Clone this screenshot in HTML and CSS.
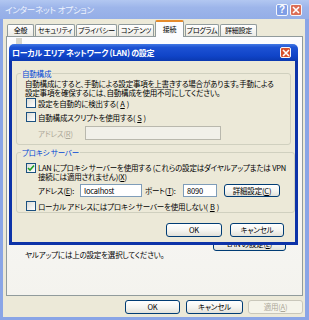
FILE: index.html
```html
<!DOCTYPE html>
<html lang="ja">
<head>
    <meta charset="UTF-8">
    <meta name="viewport" content="width=device-width, initial-scale=1.0">
    <title>インターネット オプション</title>
    <link rel="stylesheet" href="styles.css">
</head>
<body>
    <div class="window">
        <div class="titlebar">
            <span class="title">インターネット オプション</span>
            <span class="tb-btn help">?</span>
            <span class="tb-btn close">
                <svg width="8" height="8" viewBox="0 0 8 8"><path d="M1 1L7 7M7 1L1 7" stroke="#fff" stroke-width="1.6"/></svg>
            </span>
        </div>
        <div class="frame">
            <div class="tabs">
                <div class="tab w27">全般</div>
                <div class="tab w40">セキュリティ</div>
                <div class="tab w41">プライバシー</div>
                <div class="tab w36">コンテンツ</div>
                <div class="tab active w29">接続</div>
                <div class="tab w34">プログラム</div>
                <div class="tab w37">詳細設定</div>
            </div>
            <div class="panel">
                <div class="panel-icon"></div>
                <div class="lan-row">
                    <button class="btn lan-btn">LAN の設定(<u>L</u>)</button>
                </div>
                <div class="lan-note">ヤルアップには上の設定を選択してください。</div>
            </div>
            <div class="actions">
                <button class="btn w55">OK</button>
                <button class="btn w57">キャンセル</button>
                <button class="btn w55 disabled">適用(<u>A</u>)</button>
            </div>
        </div>

        <div class="dialog">
            <div class="dlg-title">
                <span class="dlg-name">ローカル エリア ネットワーク (LAN) の設定</span>
                <span class="tb-btn close active-close">
                    <svg width="8" height="8" viewBox="0 0 8 8"><path d="M1 1L7 7M7 1L1 7" stroke="#fff" stroke-width="1.6"/></svg>
                </span>
            </div>
            <div class="dlg-body">
                <fieldset class="group">
                    <legend>自動構成</legend>
                    <p class="note">自動構成にすると、手動による設定事項を上書きする場合があります。手動による<br>設定事項を確保するには、自動構成を使用不可にしてください。</p>
                    <label class="check first"><span class="box"></span>設定を自動的に検出する(<u>A</u>)</label>
                    <label class="check"><span class="box"></span>自動構成スクリプトを使用する(<u>S</u>)</label>
                    <div class="addr-row">
                        <span class="muted addr-label">アドレス(<u>R</u>)</span>
                        <span class="field disabled w136"></span>
                    </div>
                </fieldset>

                <fieldset class="group proxy">
                    <legend>プロキシ サーバー</legend>
                    <label class="check two-line">
                        <span class="box checked">
                            <svg width="8" height="8" viewBox="0 0 8 8"><path d="M1 4L3 6L7 1.5" fill="none" stroke="#21a121" stroke-width="1.6"/></svg>
                        </span>
                        <span>LAN にプロキシ サーバーを使用する (これらの設定はダイヤルアップまたは VPN<br>接続には適用されません)(<u>X</u>)</span>
                    </label>
                    <div class="proxy-row">
                        <span class="proxy-label">アドレス(<u>E</u>):</span>
                        <span class="field w62">localhost</span>
                        <span class="port-label">ポート(<u>T</u>):</span>
                        <span class="field w34">8090</span>
                        <button class="btn w56 adv-btn">詳細設定(<u>C</u>)</button>
                    </div>
                    <label class="check local"><span class="box"></span>ローカル アドレスにはプロキシ サーバーを使用しない(<u>B</u>)</label>
                </fieldset>

                <div class="dlg-actions">
                    <button class="btn w56">OK</button>
                    <button class="btn w54">キャンセル</button>
                </div>
            </div>
        </div>
    </div>
</body>
</html>
```

FILE: styles.css
```css
* {
    box-sizing: border-box;
}

body {
    margin: 0;
    font-family: "Noto Sans CJK JP", sans-serif;
    font-size: 7.5px;
    line-height: 9px;
    letter-spacing: -0.2px;
    font-feature-settings: "palt";
    color: #000000;
}

u {
    text-decoration: underline;
}

.window {
    position: relative;
    width: 309px;
    height: 320px;
    display: flex;
    flex-direction: column;
    background: #8aa5e6;
}

.titlebar {
    height: 19px;
    display: flex;
    align-items: center;
    padding: 0 7px 0 5px;
    background: linear-gradient(#b2c7f1, #9db5ea 40%, #94aee7);
}

.title {
    flex: 1;
    color: #eef3fd;
    font-size: 8.5px;
}

.tb-btn {
    width: 12px;
    height: 12px;
    margin-left: 2px;
    border: 1px solid #f4f6fc;
    border-radius: 2px;
    display: flex;
    align-items: center;
    justify-content: center;
}

.help {
    background: #7f9ee6;
    color: #ffffff;
    font-family: "Liberation Sans", sans-serif;
    font-weight: bold;
    font-size: 10px;
    letter-spacing: 0;
}

.close {
    background: #dc6d55;
}

.frame {
    flex: 1;
    margin: 0 4px 3px 3px;
    padding: 0 2px 0 3px;
    background: #ece9d8;
    display: flex;
    flex-direction: column;
}

/* tabs */

.tabs {
    height: 17px;
    display: flex;
    align-items: flex-end;
    padding-left: 1px;
    position: relative;
    z-index: 1;
}

.tab {
    height: 12px;
    margin-right: 1px;
    border: 1px solid #919b9c;
    border-bottom: none;
    border-radius: 2px 2px 0 0;
    background: linear-gradient(#ffffff, #ecebe5);
    text-align: center;
    font-size: 7px;
    letter-spacing: -0.3px;
    line-height: 11px;
    white-space: nowrap;
    overflow: hidden;
}

.tab.active {
    height: 17px;
    margin-bottom: -1px;
    border-top: 2px solid #e68b2c;
    background: #fcfcfe;
    line-height: 14px;
}

.w27 { width: 27px; }
.w29 { width: 29px; }
.w34 { width: 34px; }
.w36 { width: 36px; }
.w37 { width: 37px; }
.w40 { width: 40px; }
.w41 { width: 41px; }
.w54 { width: 54px; }
.w55 { width: 55px; }
.w56 { width: 56px; }
.w57 { width: 57px; }
.w62 { width: 62px; }
.w136 { width: 136px; }

.panel {
    height: 260px;
    border: 1px solid #919b9c;
    background: linear-gradient(#fcfcfe, #f4f3ee);
    padding: 1px 16px 0 18px;
}

.panel-icon {
    width: 6px;
    height: 6px;
    margin-left: -9px;
    background: #d8d6cc;
}

.lan-row {
    margin-top: 193px;
    display: flex;
    justify-content: flex-end;
}

.lan-btn {
    width: 73px;
}

.lan-note {
    margin-top: -1px;
}

.actions {
    margin-top: 4px;
    display: flex;
    justify-content: flex-end;
    gap: 5px;
}

.actions .btn:first-child {
    margin-right: 1px;
}

/* buttons */

.btn {
    font: inherit;
    letter-spacing: inherit;
    font-feature-settings: "palt";
    height: 14px;
    padding: 0;
    border: 1px solid #003c74;
    border-radius: 3px;
    background: linear-gradient(#ffffff, #f4f4f0 55%, #e2e1d9);
    color: #000000;
    line-height: 12px;
}

.btn.disabled {
    border-color: #c9c7ba;
    background: #f5f4ea;
    color: #aca899;
}

/* overlay dialog */

.dialog {
    position: absolute;
    left: 9px;
    top: 44px;
    width: 289px;
    height: 201px;
    display: flex;
    flex-direction: column;
}

.dlg-title {
    height: 17px;
    display: flex;
    align-items: center;
    padding: 0 7px 0 3px;
    border-radius: 5px 5px 0 0;
    background: linear-gradient(#4278e4, #1d52d3 20%, #1044c8 70%, #0b39b0);
    color: #ffffff;
    font-weight: bold;
    font-size: 8px;
    letter-spacing: -0.3px;
}

.dlg-name {
    flex: 1;
}

.active-close {
    width: 11px;
    height: 11px;
    background: #d8502c;
}

.dlg-body {
    flex: 1;
    border: 3px solid #0d33a8;
    border-top: none;
    background: #ece9d8;
    padding: 8px 4px 0 4px;
}

.group {
    margin: 0;
    padding: 0 8px 4px 9px;
    border: 1px solid #d0d0bf;
    border-radius: 3px;
}

.group legend {
    margin-left: -5px;
    padding: 0 1px;
    color: #0046d5;
    line-height: 9px;
}

.note {
    margin: 1px 0 0 -1px;
    white-space: nowrap;
}

.check {
    height: 10px;
    margin-top: 4px;
    display: flex;
    align-items: center;
    gap: 2px;
    white-space: nowrap;
}

.check.first {
    margin-top: 1px;
}

.box {
    width: 10px;
    height: 10px;
    flex: none;
    border: 1px solid #1c5180;
    background: linear-gradient(135deg, #dcdcd7, #ffffff);
    display: flex;
    align-items: center;
    justify-content: center;
}

.addr-row {
    margin-top: 4px;
    display: flex;
    align-items: center;
    padding-left: 12px;
}

.muted {
    color: #aca899;
}

.addr-label {
    width: 47px;
}

.field {
    height: 14px;
    padding: 0 3px;
    border: 1px solid #7f9db9;
    background: #ffffff;
    line-height: 12px;
}

.field.disabled {
    border-color: #b9b8ad;
    background: #f1f0e9;
}

.proxy {
    margin-top: 3px;
    padding-bottom: 1px;
}

.two-line {
    height: 18px;
    margin-top: 6px;
    align-items: flex-start;
    line-height: 9px;
}

.proxy-row {
    margin-top: 3px;
    display: flex;
    align-items: center;
    padding-left: 12px;
    white-space: nowrap;
}

.proxy-row .field {
    height: 13px;
    line-height: 11px;
}

.proxy-label {
    width: 42px;
}

.port-label {
    width: 38px;
    margin-left: 3px;
}

.adv-btn {
    margin-left: 7px;
    height: 13px;
    line-height: 11px;
}

.check.local {
    margin-top: 4px;
}

.dlg-actions {
    margin-top: 10px;
    padding-right: 7px;
    display: flex;
    justify-content: flex-end;
    gap: 8px;
}
```
